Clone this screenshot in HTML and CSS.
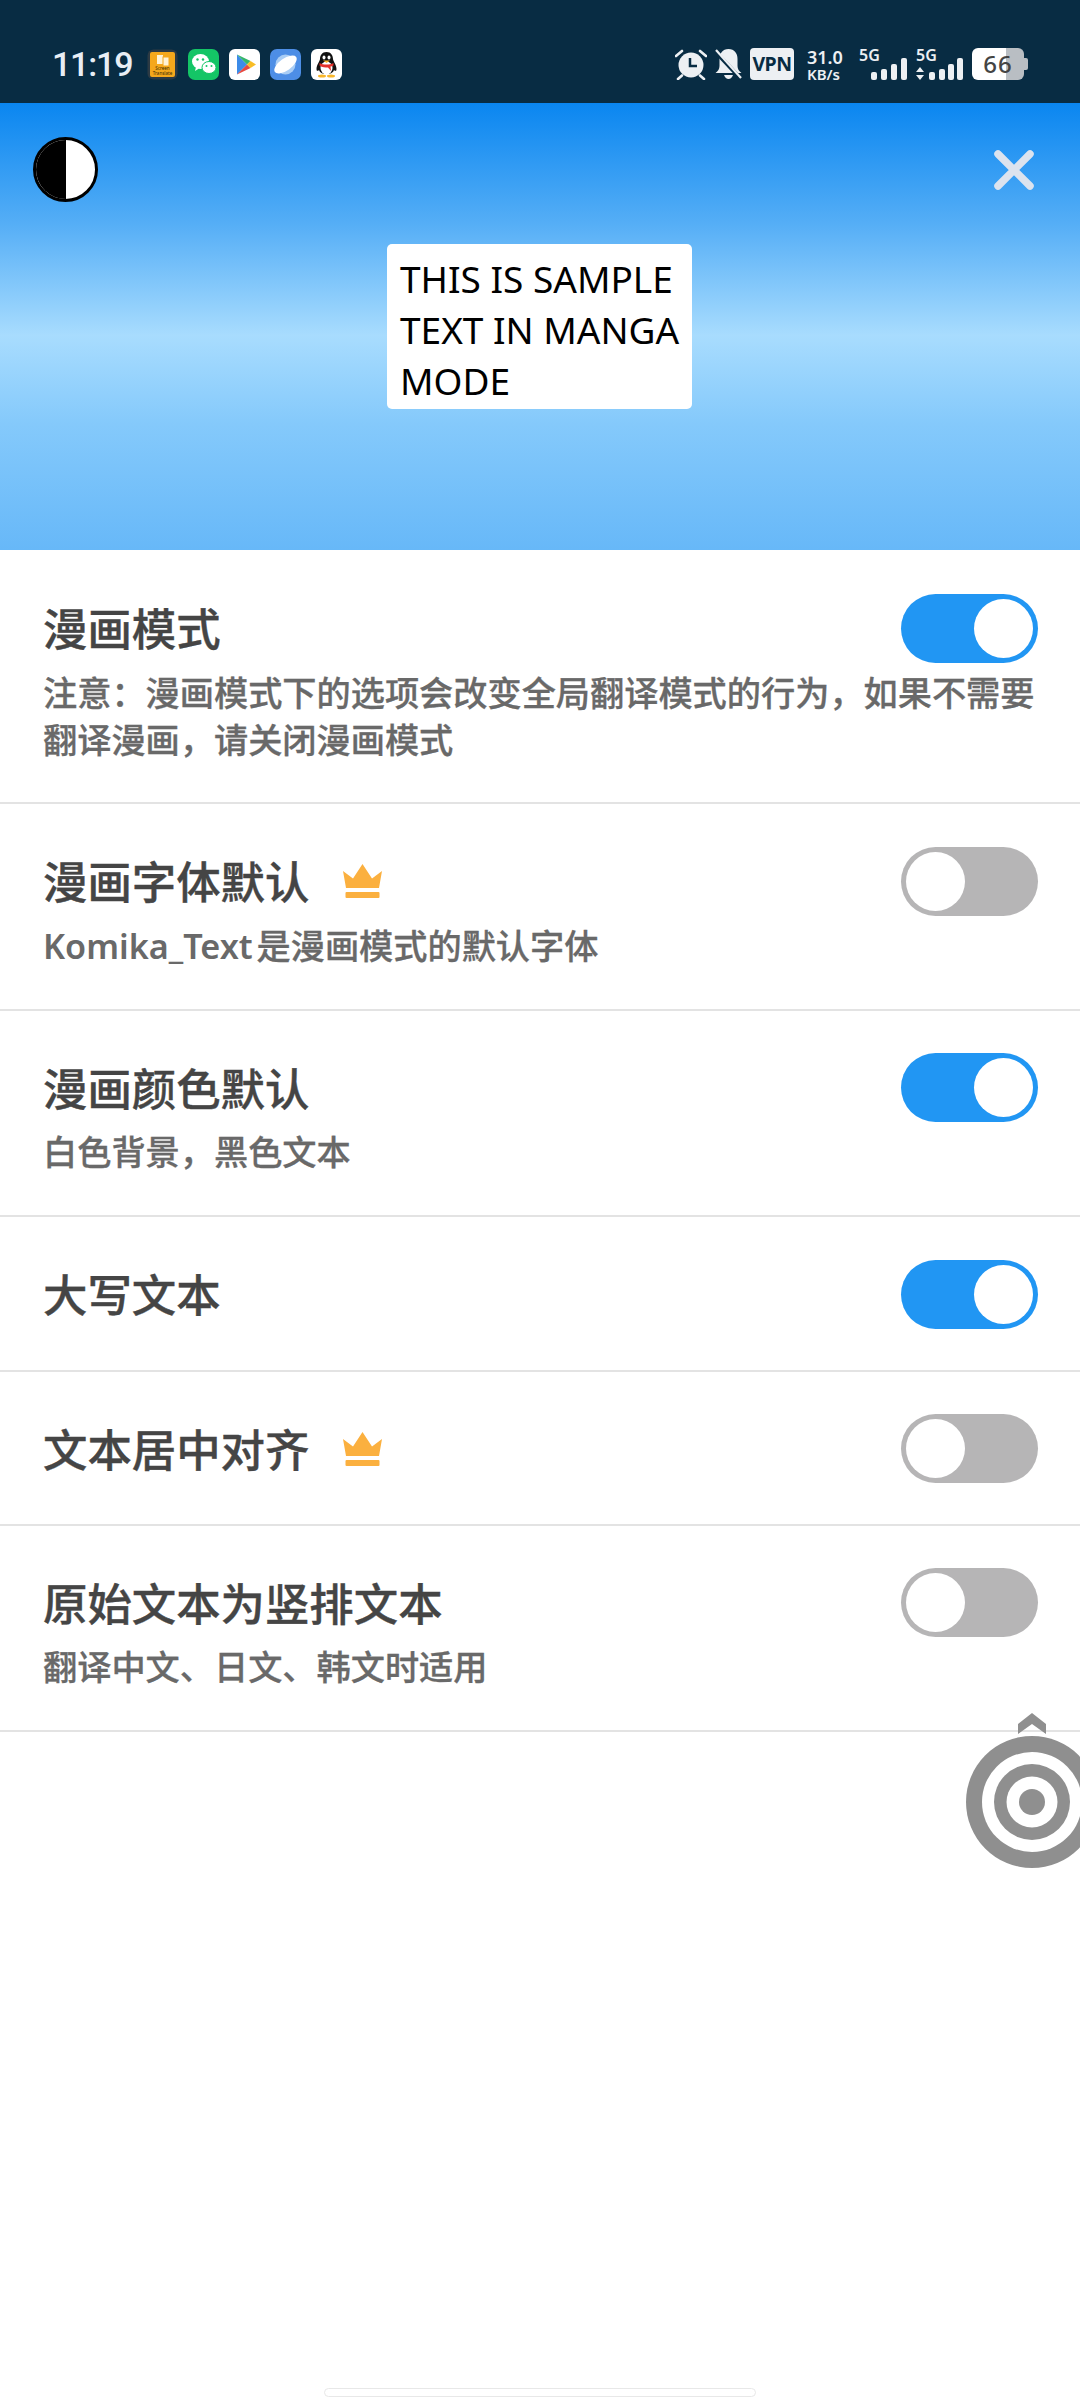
FILE: index.html
```html
<!DOCTYPE html>
<html lang="zh-CN">
<head>
    <meta charset="UTF-8">
    <meta name="viewport" content="width=device-width, initial-scale=1.0">
    <title>漫画模式</title>
    <link rel="stylesheet" href="styles.css">
</head>
<body>

    <!-- Status bar -->
    <div class="status-bar">
        <span class="clock">11:19</span>
        <div class="app-icons">
            <svg class="app-icon" viewBox="0 0 31 31">
                <rect x="0.5" y="0.5" width="30" height="30" rx="6" fill="#2c3a44"/>
                <rect x="3" y="3" width="25" height="25" rx="2" fill="#f5a81c"/>
                <rect x="10" y="6" width="6" height="9" fill="#fff3d6"/>
                <rect x="16" y="8" width="6" height="9" fill="#fff3d6" stroke="#f5a81c"/>
                <text x="15.5" y="21" class="tiny-text">Screen</text>
                <text x="15.5" y="26" class="tiny-text">Translate</text>
            </svg>
            <svg class="app-icon" viewBox="0 0 31 31">
                <rect width="31" height="31" rx="7" fill="#14c566"/>
                <ellipse cx="12.5" cy="12.5" rx="8.5" ry="7.5" fill="#fff"/>
                <path d="M8 18l-1 4 4-2.500z" fill="#fff"/>
                <ellipse cx="21" cy="18.500" rx="7" ry="6" fill="#fff" stroke="#14c566"/>
                <circle cx="9.500" cy="10.500" r="1.200" fill="#14c566"/>
                <circle cx="15" cy="10.500" r="1.200" fill="#14c566"/>
                <circle cx="18.500" cy="17" r="1" fill="#14c566"/>
                <circle cx="23.500" cy="17" r="1" fill="#14c566"/>
            </svg>
            <svg class="app-icon" viewBox="0 0 31 31">
                <rect width="31" height="31" rx="6" fill="#fff"/>
                <path d="M8 5.500v20l10-10z" fill="#3c8be8"/>
                <path d="M8 5.500l10 10 3.500-3.500z" fill="#35b56a"/>
                <path d="M8 25.500l10-10 3.500 3.500z" fill="#e6483f"/>
                <path d="M21.500 12l5.500 3.500-5.500 3.500-3.500-3.500z" fill="#f8bd26"/>
            </svg>
            <svg class="app-icon" viewBox="0 0 31 31">
                <rect width="31" height="31" rx="7" fill="#4d8ee6"/>
                <circle cx="15.500" cy="15.500" r="10" fill="#a9cdf5"/>
                <ellipse cx="15.500" cy="15.500" rx="13" ry="6" fill="#fff" transform="rotate(-35 15.500 15.500)"/>
            </svg>
            <svg class="app-icon" viewBox="0 0 31 31">
                <rect width="31" height="31" rx="6" fill="#fff"/>
                <path d="M15.500 3c-4.500 0-6.500 3.500-6.500 7 0 2-3.500 6-3.500 10 0 2 1 2.500 2.500 1 1 3 4 4 7.500 4s6.500-1 7.500-4c1.500 1.500 2.500 1 2.500-1 0-4-3.500-8-3.500-10 0-3.500-2-7-6.500-7z" fill="#111"/>
                <ellipse cx="15.500" cy="19" rx="6" ry="6.500" fill="#fff"/>
                <ellipse cx="13" cy="8.500" rx="1.500" ry="2" fill="#fff"/>
                <ellipse cx="18" cy="8.500" rx="1.500" ry="2" fill="#fff"/>
                <path d="M12 11.500h7l-3.500 2.500z" fill="#f8b62a"/>
                <path d="M8.500 14c4 2 10 2 14 0v2.500c-1 .5-2 1-3 1l.5 4.500-3-3.500c-2.500 0-6 0-8.500-2z" fill="#e5312b"/>
                <ellipse cx="11" cy="27" rx="4" ry="1.500" fill="#f8b62a"/>
                <ellipse cx="20" cy="27" rx="4" ry="1.500" fill="#f8b62a"/>
            </svg>
        </div>

        <div class="status-right">
            <svg class="alarm" viewBox="0 0 32 32">
                <circle cx="16" cy="17" r="12.500" fill="#edf0f3"/>
                <path d="M1 8l6-5M31 8l-6-5M3 31l4-3.500M29 31l-4-3.500" stroke="#edf0f3" stroke-width="2.600" stroke-linecap="round"/>
                <path d="M15 10v8h7" fill="none" stroke="#082c43" stroke-width="2.500"/>
            </svg>
            <svg class="bell" viewBox="0 0 27 32">
                <path d="M13.500 1c-6 0-9 4.500-9 10v7c0 3-1.500 5-4 7h26c-2.500-2-4-4-4-7v-7c0-5.500-3-10-9-10z" fill="#edf0f3"/>
                <path d="M9 27c1 2.500 2.500 4 4.500 4s3.500-1.500 4.500-4z" fill="#edf0f3"/>
                <path d="M0 3l26 28" stroke="#082c43" stroke-width="4"/>
                <path d="M1 2l25 28" stroke="#edf0f3" stroke-width="2.200"/>
            </svg>
            <span class="vpn">VPN</span>
            <div class="speed">
                <span class="speed-num">31.0</span>
                <span class="speed-unit">KB/s</span>
            </div>
            <div class="signal">
                <span class="net-text">5G</span>
                <svg class="signal-bars" viewBox="0 0 48 32">
                    <rect x="12" y="24" width="6" height="8" rx="2"/>
                    <rect x="22" y="21" width="6" height="11" rx="2"/>
                    <rect x="32" y="16" width="6" height="16" rx="2"/>
                    <rect x="42" y="10" width="6" height="22" rx="2"/>
                </svg>
            </div>
            <div class="signal signal-two">
                <span class="net-text">5G</span>
                <svg class="signal-bars" viewBox="0 0 48 32">
                    <path d="M4 19l4 5h-8zM4 32l4-5h-8z"/>
                    <rect x="13" y="24" width="6" height="8" rx="2"/>
                    <rect x="23" y="21" width="6" height="11" rx="2"/>
                    <rect x="32" y="16" width="6" height="16" rx="2"/>
                    <rect x="41" y="10" width="6" height="22" rx="2"/>
                </svg>
            </div>
            <div class="battery">
                <div class="battery-body">66</div>
                <div class="battery-nub"></div>
            </div>
        </div>
    </div>

    <!-- Preview area -->
    <div class="hero">
        <div class="hero-top">
            <div class="contrast-btn"><div class="contrast-half"></div></div>
            <svg class="close-btn" viewBox="0 0 40 40">
                <path d="M4 4l32 32M36 4l-32 32" stroke="#dce3ee" stroke-width="7.500" stroke-linecap="round"/>
            </svg>
        </div>
        <div class="sample-card">THIS IS SAMPLE TEXT IN MANGA MODE</div>
    </div>

    <!-- Settings -->
    <div class="settings">
        <div class="row">
            <div class="row-head">
                <span class="row-title">漫画模式</span>
                <div class="toggle on"><div class="knob"></div></div>
            </div>
            <p class="row-sub">注意：漫画模式下的选项会改变全局翻译模式的行为，如果不需要翻译漫画，请关闭漫画模式</p>
        </div>

        <div class="row">
            <div class="row-head">
                <span class="row-title">漫画字体默认</span>
                <svg class="crown" viewBox="0 0 39 34">
                    <path d="M0 7l10 7.500L19.500 0 29 14.500 39 7l-3 17H3z" fill="#fbb03f"/>
                    <rect x="2.500" y="28" width="34" height="6" rx="1" fill="#fbb03f"/>
                </svg>
                <div class="toggle"><div class="knob"></div></div>
            </div>
            <p class="row-sub"><span class="latin">Komika_Text</span> 是漫画模式的默认字体</p>
        </div>

        <div class="row">
            <div class="row-head">
                <span class="row-title">漫画颜色默认</span>
                <div class="toggle on"><div class="knob"></div></div>
            </div>
            <p class="row-sub">白色背景，黑色文本</p>
        </div>

        <div class="row">
            <div class="row-head">
                <span class="row-title">大写文本</span>
                <div class="toggle on"><div class="knob"></div></div>
            </div>
        </div>

        <div class="row">
            <div class="row-head">
                <span class="row-title">文本居中对齐</span>
                <svg class="crown" viewBox="0 0 39 34">
                    <path d="M0 7l10 7.500L19.500 0 29 14.500 39 7l-3 17H3z" fill="#fbb03f"/>
                    <rect x="2.500" y="28" width="34" height="6" rx="1" fill="#fbb03f"/>
                </svg>
                <div class="toggle"><div class="knob"></div></div>
            </div>
        </div>

        <div class="row">
            <div class="row-head">
                <span class="row-title">原始文本为竖排文本</span>
                <div class="toggle"><div class="knob"></div></div>
            </div>
            <p class="row-sub">翻译中文、日文、韩文时适用</p>
        </div>
    </div>

    <!-- Floating translate ball -->
    <svg class="float-ball" viewBox="0 0 132 155">
        <path d="M66 0l14 11v10L66 11 52 21v-10z" fill="#8f8f8f"/>
        <circle cx="66" cy="89" r="66" fill="#8f8f8f"/>
        <circle cx="66" cy="89" r="50" fill="#fff"/>
        <circle cx="66" cy="89" r="38" fill="#8f8f8f"/>
        <circle cx="66" cy="89" r="25.500" fill="#fff"/>
        <circle cx="66" cy="89" r="13" fill="#8f8f8f"/>
    </svg>

    <div class="home-bar"></div>

</body>
</html>
```

FILE: styles.css
```css
/* General Body and Layout */
body {
    font-family: "Noto Sans", "Noto Sans CJK SC", sans-serif;
    background-color: #fff;
    margin: 0;
    padding: 0;
    width: 1080px;
    height: 2400px;
    position: relative;
    overflow: hidden;
}

/* Status Bar */
.status-bar {
    height: 103px;
    background-color: #082c43;
    display: flex;
    align-items: flex-start;
    padding: 48px 52px 0 52px;
    box-sizing: border-box;
}

.clock {
    color: #e8eef5;
    font-family: Roboto, sans-serif;
    font-size: 34px;
    font-weight: 500;
    letter-spacing: -1.2px;
    line-height: 32px;
    width: 95px;
}

.app-icons {
    display: flex;
    gap: 10px;
    margin-top: 1px;
}

.app-icon {
    width: 31px;
    height: 31px;
}

.tiny-text {
    font-size: 4.500px;
    text-anchor: middle;
    fill: #3a2a05;
}

.status-right {
    margin-left: auto;
    display: flex;
    align-items: flex-start;
    gap: 8px;
}

.alarm {
    width: 32px;
    height: 32px;
}

.bell {
    width: 27px;
    height: 32px;
}

.vpn {
    width: 44px;
    height: 32px;
    background-color: #edf0f3;
    border-radius: 4px;
    color: #082c43;
    font-size: 19.500px;
    font-weight: 700;
    letter-spacing: -0.5px;
    line-height: 32px;
    text-align: center;
}

.speed {
    width: 38px;
    margin-left: 5px;
    display: flex;
    flex-direction: column;
    color: #edf0f3;
    white-space: nowrap;
}

.speed-num {
    font-size: 18px;
    font-weight: 600;
    line-height: 18px;
}

.speed-unit {
    font-size: 15px;
    font-weight: 600;
    line-height: 16px;
}

.signal {
    position: relative;
    width: 48px;
    height: 32px;
    margin-left: 6px;
}

.signal-two {
    margin-left: 1px;
}

.signal-bars {
    display: block;
    width: 48px;
    height: 32px;
    fill: #edf0f3;
}

.net-text {
    position: absolute;
    left: 0;
    top: 0;
    color: #edf0f3;
    font-size: 16px;
    font-weight: 600;
    line-height: 14px;
}

.battery {
    display: flex;
    align-items: center;
    height: 32px;
}

.battery-body {
    width: 52px;
    height: 32px;
    border-radius: 6px;
    background: linear-gradient(to right, #fff 0, #fff 66%, #b9bec3 66%, #b9bec3 100%);
    color: #444;
    font-size: 24px;
    font-weight: 500;
    letter-spacing: 1px;
    line-height: 32px;
    text-align: center;
}

.battery-nub {
    width: 4px;
    height: 12px;
    border-radius: 0 2px 2px 0;
    background-color: #b9bec3;
}

/* Preview Area */
.hero {
    height: 447px;
    background: linear-gradient(to bottom, #0a86f0 0%, #55aef6 27%, #a8dcfe 52%, #84c9fb 72%, #67b8f8 100%);
}

.hero-top {
    display: flex;
    justify-content: space-between;
    align-items: center;
    padding: 34px 46px 0 33px;
}

.contrast-btn {
    width: 65px;
    height: 65px;
    box-sizing: border-box;
    border: 3px solid #000;
    border-radius: 50%;
    background-color: #fff;
    overflow: hidden;
}

.contrast-half {
    width: 50%;
    height: 100%;
    background-color: #000;
}

.close-btn {
    width: 40px;
    height: 40px;
}

.sample-card {
    width: 305px;
    box-sizing: border-box;
    margin: 42px 0 0 387px;
    padding: 9px 8px 3px 13px;
    background-color: #fff;
    border-radius: 5px;
    color: #000;
    font-size: 37px;
    line-height: 51px;
}

/* Settings Rows */
.settings {
    padding-top: 1px;
}

.row {
    padding: 42.500px 42px 40.900px 43px;
    border-bottom: 2px solid #e3e3e3;
}

.row-head {
    display: flex;
    align-items: center;
    height: 69px;
}

.row-title {
    color: #454545;
    font-size: 44.400px;
    font-weight: 500;
    padding-bottom: 3px;
    -webkit-text-stroke: 0.4px #454545;
}

.crown {
    width: 39px;
    height: 34px;
    margin-left: 34px;
}

.toggle {
    width: 137px;
    height: 69px;
    margin-left: auto;
    padding: 5px;
    box-sizing: border-box;
    border-radius: 35px;
    background-color: #b6b5b6;
    display: flex;
}

.toggle.on {
    background-color: #2196f3;
    justify-content: flex-end;
}

.knob {
    width: 59px;
    height: 59px;
    border-radius: 50%;
    background-color: #fff;
}

.row-sub {
    margin: 6px 0 -1px;
    color: #696969;
    font-size: 34.200px;
    font-weight: 500;
    line-height: 47px;
    -webkit-text-stroke: 0.3px #696969;
}

.latin {
    font-weight: 600;
    margin-right: -5px;
    -webkit-text-stroke: 0;
}

/* Floating Ball */
.float-ball {
    position: absolute;
    left: 966px;
    top: 1713px;
    width: 132px;
    height: 155px;
}

/* Home Indicator */
.home-bar {
    position: absolute;
    left: 324px;
    top: 2388px;
    width: 432px;
    height: 9px;
    box-sizing: border-box;
    border: 1px solid #e8e8e8;
    border-radius: 5px;
    background-color: #fff;
}
```
